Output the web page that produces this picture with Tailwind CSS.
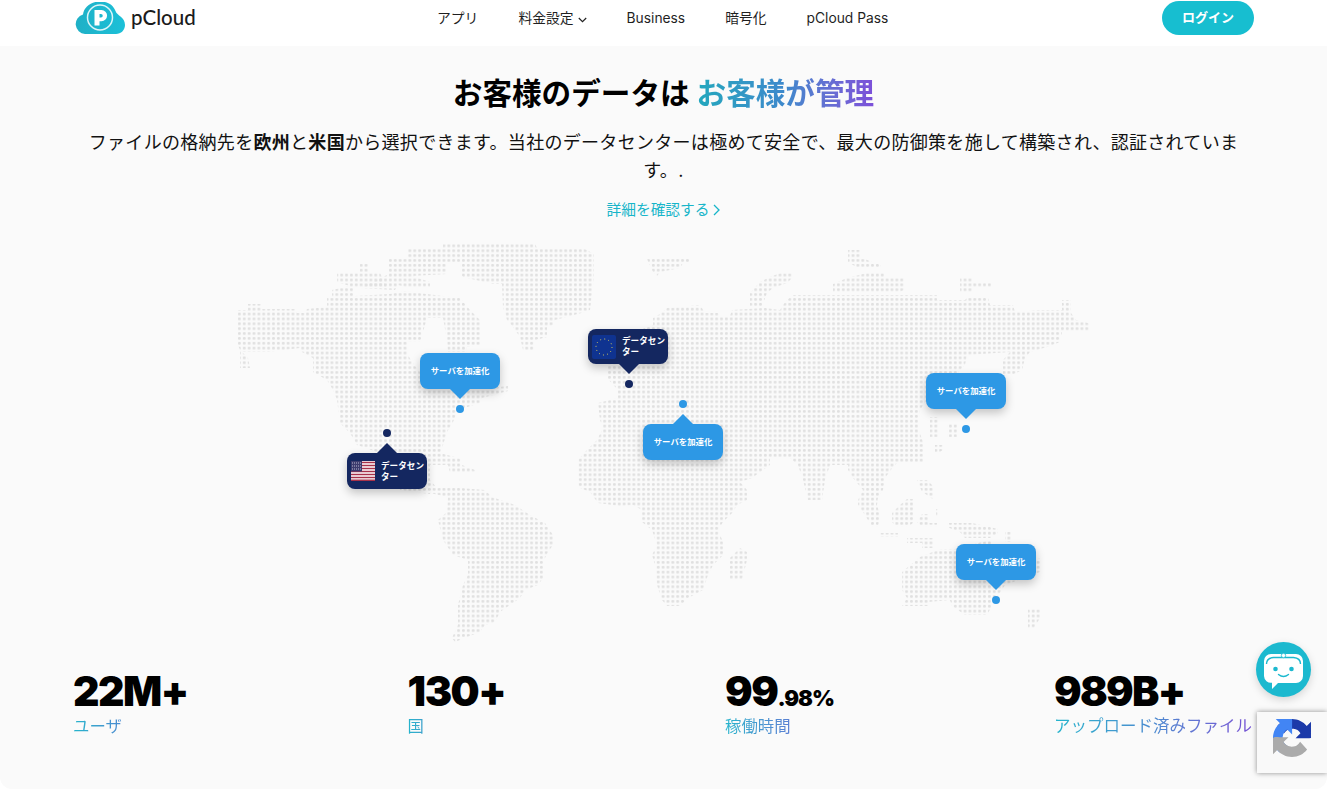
<!DOCTYPE html>
<html lang="ja">
<head>
<meta charset="utf-8">
<title>pCloud</title>
<script src="https://cdn.jsdelivr.net/npm/@tailwindcss/browser@4"></script>
</head>
<body class="bg-white h-[789px] overflow-hidden relative font-[Inter,'Noto_Sans_CJK_JP',sans-serif] text-black">
<header class="h-[46px] bg-white pt-px pl-[75px] pr-[73px]">
  <div class="flex items-center h-[34px]">
    <div class="w-[362px] flex items-center gap-[6px]">
      <svg class="w-[50px] h-[32px]" viewBox="0 0 50 32">
        <defs><linearGradient id="c" x1="0" x2="1"><stop offset="0" stop-color="#1fb0c6"/><stop offset="1" stop-color="#1cc0d8"/></linearGradient></defs>
        <path d="M10 32a10 10 0 0 1-2-19.6C9 5 16-.5 25-.5c7.500 0 13 3 15.500 9.500C42 14 50 14.500 50 23c0 5-4 9-9 9z" fill="url(#c)"/>
        <circle cx="25" cy="15.500" r="12.500" fill="none" stroke="#fff" stroke-opacity=".85" stroke-width="1.500"/>
        <path d="M19.500 23.500V8h7a5.500 5.500 0 0 1 0 11.200H24.500v4.300zM24.500 12v3.500h1.500a1.750 1.750 0 0 0 0-3.500z" fill="#fff" fill-rule="evenodd"/>
      </svg>
      <span class="font-['Lato',sans-serif] text-[20.500px] leading-none font-medium text-[#1b1b1b] -mt-px">pCloud</span>
    </div>
    <nav class="flex items-center gap-10 text-[13.800px] text-[#1f1f1f]">
      <a>アプリ</a>
      <a class="flex items-center gap-[4px]">料金設定
        <svg class="w-[9px] h-[6px] mt-[3px]" viewBox="0 0 9 6"><path d="M.8 1l3.700 3.700L8.200 1" fill="none" stroke="#222" stroke-width="1.200"/></svg>
      </a>
      <a>Business</a>
      <a>暗号化</a>
      <a>pCloud Pass</a>
    </nav>
    <button class="ml-auto w-[92px] h-[34px] rounded-full bg-[#17bed0] text-white text-[13px] font-semibold">ログイン</button>
  </div>
</header>

<main class="h-[743px] bg-[#fafafa] rounded-b-[12px] pt-[24px]">
  <h1 class="text-center text-[29.600px] leading-[46px] font-bold">お客様のデータは <span class="font-semibold bg-gradient-to-r from-[#22a7bd] via-[#3d88cc] to-[#7c4fd9] bg-clip-text text-transparent">お客様が管理</span></h1>
  <p class="mt-[12.500px] text-center text-[18px] leading-[28px] tracking-[0.3px] text-[#111] font-normal">ファイルの格納先を<b>欧州</b>と<b>米国</b>から選択できます。当社のデータセンターは極めて安全で、最大の防御策を施して構築され、認証されていま<br>す。.</p>
  <a class="mt-[13.500px] flex items-center justify-center gap-[4px] h-[24px] text-[14.700px] text-[#17b5c9]">詳細を確認する
    <svg class="w-[7px] h-[12px]" viewBox="0 0 7 12"><path d="M1 1l5 5-5 5" fill="none" stroke="#17b5c9" stroke-width="1.300"/></svg>
  </a>

  <div class="relative mt-[18px] h-[405px]">
    <svg class="w-[1327px] h-[405px]" viewBox="0 240 1327 405">
      <defs>
        <pattern id="dots" patternUnits="userSpaceOnUse" x="238" y="244.500" width="4.870" height="4.870">
          <rect width="2.800" height="2.800" rx="1" fill="#e0e0e0"/>
        </pattern>
      </defs>
      <g fill="url(#dots)">
        <!-- Greenland and the Arctic islands -->
        <path d="M443 244H535L537 248H583L594 254V277L590 310 585 312 555 320 553 325 547 327V337L535 340V350H523L520 337 513 327 507 320 503 307 502 284H493L463 277 460 273V262H447V250L443 248Z"/>
        <path d="M387 258H407V249H447V274L412 276 430 282V287H405L398 285 395 290 360 288 387 275Z"/>
        <path d="M360 263H369V273H360Z"/>
        <path d="M337 273H380L387 288H353V297H332V290L350 286 337 282Z"/>
        <!-- North America -->
        <path d="M238 310H248V304H261V309H295L297 313H305L307 309 327 307V298H353L355 296 390 294 405 291 418 293 460 298 470 310 480 320 481 345 467 347V352H448L447 340 443 318H427L420 342H408V355L412 362 420 372 422 385 490 388 508 386V391L482 398 480 403 458 410 453 422 447 432 443 445 440 453 462 459V465L475 470V473H450L448 465 430 465V480L437 488 430 490V494L400 490 397 454 380 453 357 445 350 433 340 423 337 400 333 390 327 380 313 372V358L302 352 300 348 268 352H242L248 358 250 368H240V350L238 345Z"/>
        <!-- South America -->
        <path d="M430 489 448 487 485 490 492 497 515 505 530 515 545 523 553 535V545L548 552 543 562V578L538 585 525 590 520 598 510 605 500 612 495 622 485 625 480 632 467 637 455 642 452 638 458 625V605L463 585 468 575V560L453 555 443 540 438 520 447 512 448 497 430 493Z"/>
        <!-- Iceland / Scandinavia top -->
        <path d="M647 259H690V263H683L680 268 660 272 657 276 653 272Z"/>
        <!-- Eurasia and Africa -->
        <path d="M667 308 700 305 705 313H718L720 316H730L732 310 765 308 780 310 783 305 787 300 793 295H937V300H965L967 298H988L990 305H1013L1015 312 1040 310H1062V300H1071V313L1076 320 1085 322 1090 324V331H1075L1062 332 1060 342 1047 347 1030 352 1025 358 1022 370 1012 375H1003V360L1010 352 967 355 965 365 960 370 950 385 930 395 920 410 918 428 923 442V462H898L893 467 885 478 883 490 878 497 877 505 880 515 878 527H872L865 515 858 505V500L863 490 853 478 848 470V465H830L825 480 822 500H808L803 480 798 465 790 458H770V465L763 470 752 478 740 482 747 490V500L737 505 733 512 723 522 718 530 723 542V555L713 565 708 575 703 590 688 598 680 606H667L662 600 657 585 655 565 652 555 657 545 652 530 642 522V510L633 505 620 506 598 503 590 492 578 487V460L587 450 597 440 603 428 600 420 598 403 618 398V390L607 378V364L620 350 640 330 653 325V318L660 314Z"/>
        <!-- Russian Arctic -->
        <path d="M848 250H860V257L872 262 881 265V268H858L848 262Z"/>
        <path d="M783 272H792V278L787 283 773 288 767 293 762 306H750V293L760 282 770 277Z"/>
        <path d="M867 273H884L885 278H904V290L900 292H833V284L847 278Z"/>
        <path d="M960 278H972V283H992V287H972V292H960Z"/>
        <!-- Japan, Korea -->
        <path d="M930 417H938V437H930Z"/>
        <path d="M947 423H957V437H947Z"/>
        <path d="M935 445H943V450L938 453H935Z"/>
        <!-- South-East Asia islands -->
        <path d="M917 480H927L934 487V500L927 495 922 492Z"/>
        <path d="M907 499H914V522L908 527H897L892 522V513L900 505Z"/>
        <path d="M922 514H928V523H937V527H922L917 522Z"/>
        <path d="M936 509H939V517H936Z"/>
        <path d="M947 523H972L998 529V533L990 538H965L960 532 947 527Z"/>
        <path d="M1005 532H1012V542H1005Z"/>
        <path d="M880 533H898V537H880Z"/>
        <path d="M907 538H933V548H922V543H907Z"/>
        <!-- Madagascar -->
        <path d="M740 548 747 552V560L742 580H730V558Z"/>
        <!-- Australia, New Zealand -->
        <path d="M942 549H955L990 540 1005 575 1040 558V572L1005 585 995 600 987 615H965L952 606 950 600 928 602V606H902L907 598 902 590V572L920 557 930 553Z"/>
        <path d="M1028 608H1040V618L1034 628H1028Z"/>
      </g>
    </svg>

    <!-- server pin, New York -->
    <div class="absolute left-[420px] top-[113px] w-[80px] h-[36px] rounded-[8px] bg-[#2d98e5] shadow-[0_4px_10px_rgba(0,0,0,0.22)] flex items-center justify-center text-white text-[8.400px] font-bold">サーバを加速化
      <span class="absolute left-[30px] top-full border-x-[10px] border-x-transparent border-t-[10px] border-t-[#2d98e5]"></span>
    </div>
    <span class="absolute left-[456px] top-[165px] w-[8px] h-[8px] rounded-full bg-[#2d98e5]"></span>

    <!-- US data centre -->
    <span class="absolute left-[383px] top-[189px] w-[8px] h-[8px] rounded-full bg-[#142760]"></span>
    <div class="absolute left-[347px] top-[213px] w-[80px] h-[36px] rounded-[8px] bg-[#142760] shadow-[0_4px_10px_rgba(0,0,0,0.22)] flex items-center pl-[4px] gap-[6px] text-white text-[8.600px] leading-[11px] font-bold">
      <span class="absolute left-[30px] bottom-full border-x-[10px] border-x-transparent border-b-[10px] border-b-[#142760]"></span>
      <svg class="w-[24px] h-[20px] shrink-0" viewBox="0 0 24 20">
        <rect width="24" height="20" fill="#fff"/>
        <path d="M0 1.500H24M0 4.500H24M0 7.500H24M0 10.500H24M0 13.500H24M0 16.500H24M0 19.300H24" stroke="#a8324a" stroke-width="1.500"/>
        <rect width="11" height="10.500" fill="#3c3b6e"/>
        <path d="M1 2H10M1 5H10M1 8H10" stroke="#c8c8dc" stroke-width=".9" stroke-dasharray="1 1"/>
      </svg>
      <span class="w-[44px] mt-px">データセンター</span>
    </div>

    <!-- EU data centre -->
    <div class="absolute left-[588px] top-[89px] w-[80px] h-[35px] rounded-[8px] bg-[#142760] shadow-[0_4px_10px_rgba(0,0,0,0.22)] flex items-center pl-[4px] gap-[6px] text-white text-[8.600px] leading-[11px] font-bold">
      <span class="absolute left-[31px] top-full border-x-[10px] border-x-transparent border-t-[10px] border-t-[#142760]"></span>
      <svg class="w-[24px] h-[24px] shrink-0" viewBox="0 0 24 24">
        <rect width="24" height="24" rx="2" fill="#0f3390"/>
        <circle cx="12" cy="12" r="8" fill="none" stroke="#e6d75a" stroke-width="1" stroke-dasharray="1 3.190"/>
      </svg>
      <span class="w-[44px]">データセンター</span>
    </div>
    <span class="absolute left-[625px] top-[140px] w-[8px] h-[8px] rounded-full bg-[#142760]"></span>

    <!-- server pin, Middle East -->
    <span class="absolute left-[679px] top-[160px] w-[8px] h-[8px] rounded-full bg-[#2d98e5]"></span>
    <div class="absolute left-[643px] top-[184px] w-[80px] h-[36px] rounded-[8px] bg-[#2d98e5] shadow-[0_4px_10px_rgba(0,0,0,0.22)] flex items-center justify-center text-white text-[8.400px] font-bold">サーバを加速化
      <span class="absolute left-[30px] bottom-full border-x-[10px] border-x-transparent border-b-[10px] border-b-[#2d98e5]"></span>
    </div>

    <!-- server pin, Tokyo -->
    <div class="absolute left-[926px] top-[133px] w-[80px] h-[36px] rounded-[8px] bg-[#2d98e5] shadow-[0_4px_10px_rgba(0,0,0,0.22)] flex items-center justify-center text-white text-[8.400px] font-bold">サーバを加速化
      <span class="absolute left-[30px] top-full border-x-[10px] border-x-transparent border-t-[10px] border-t-[#2d98e5]"></span>
    </div>
    <span class="absolute left-[962px] top-[185px] w-[8px] h-[8px] rounded-full bg-[#2d98e5]"></span>

    <!-- server pin, Sydney -->
    <div class="absolute left-[956px] top-[304px] w-[80px] h-[36px] rounded-[8px] bg-[#2d98e5] shadow-[0_4px_10px_rgba(0,0,0,0.22)] flex items-center justify-center text-white text-[8.400px] font-bold">サーバを加速化
      <span class="absolute left-[30px] top-full border-x-[10px] border-x-transparent border-t-[10px] border-t-[#2d98e5]"></span>
    </div>
    <span class="absolute left-[992px] top-[356px] w-[8px] h-[8px] rounded-full bg-[#2d98e5]"></span>
  </div>

  <section class="mt-[24px] pl-[73px] pr-[75px] flex justify-between">
    <div>
      <div class="text-[41px] leading-[44px] font-black tracking-[-1.500px]">22M+</div>
      <div class="mt-px inline-block text-[16.400px] leading-[24px] bg-gradient-to-r from-[#22b4cc] to-[#4a8ad0] bg-clip-text text-transparent">ユーザ</div>
    </div>
    <div>
      <div class="text-[41px] leading-[44px] font-black tracking-[-1.500px]">130+</div>
      <div class="mt-px inline-block text-[16.400px] leading-[24px] bg-gradient-to-r from-[#22b4cc] to-[#3fa0cc] bg-clip-text text-transparent">国</div>
    </div>
    <div>
      <div class="h-[44px] flex items-baseline text-[41px] leading-[44px] font-black tracking-[-1.500px]">99<span class="text-[22px] leading-none tracking-[-1px]">.98%</span></div>
      <div class="mt-px inline-block text-[16.400px] leading-[24px] bg-gradient-to-r from-[#22b4cc] to-[#5a7fd4] bg-clip-text text-transparent">稼働時間</div>
    </div>
    <div>
      <div class="text-[41px] leading-[44px] font-black tracking-[-1.700px]">989B+</div>
      <div class="mt-px inline-block text-[16.500px] leading-[24px] bg-gradient-to-r from-[#22b4cc] via-[#4a8ad0] to-[#7550d4] bg-clip-text text-transparent">アップロード済みファイル</div>
    </div>
  </section>
</main>

<!-- chat bot -->
<div class="absolute left-[1256px] top-[642px] w-[55px] h-[55px] rounded-full bg-[#1cb9cf] shadow-[0_3px_8px_rgba(0,0,0,0.15)]">
  <svg class="w-[55px] h-[55px]" viewBox="0 0 55 55">
    <path d="M15 12h25a7 7 0 0 1 7 7v15a7 7 0 0 1-7 7H22l-6 6v-6.300A7 7 0 0 1 8 34V19a7 7 0 0 1 7-7z" fill="#fff"/>
    <path d="M10.500 22q0-6 7-6.500h20q7 .5 7 6.500" fill="none" stroke="#1cb9cf" stroke-width="1.400"/>
    <circle cx="27.500" cy="13.500" r="2.200" fill="#fff" stroke="#1cb9cf" stroke-width=".8"/>
    <circle cx="19.500" cy="27" r="2.300" fill="#1cb9cf"/>
    <circle cx="35.500" cy="27" r="2.300" fill="#1cb9cf"/>
    <path d="M22.500 32.500q5 4 10 0" fill="none" stroke="#1cb9cf" stroke-width="1.400" stroke-linecap="round"/>
  </svg>
</div>

<!-- reCAPTCHA badge -->
<div class="absolute left-[1257px] top-[712px] w-[70px] h-[61px] bg-[#f9f9f9] shadow-[0_0_5px_rgba(128,128,128,0.9)] pl-[16px] pt-[7px]">
  <svg class="w-[38px] h-[38px]" viewBox="0 0 64 64">
    <path d="M64 31.955l-.033-1.37V4.687l-7.16 7.16C50.948 4.674 42.033.093 32.05.093c-10.4 0-19.622 4.96-25.458 12.64l11.736 11.86a15.550 15.550 0 0 1 4.754-5.334c2.050-1.600 4.952-2.906 9.968-2.906.606 0 1.074.07 1.417.2a15.400 15.400 0 0 1 11.790 7.502l-8.300 8.300c10.520-.04 22.400-.066 23.070.03" fill="#1c3aa9"/>
    <path d="M31.862 0l-1.370.033H4.594l7.160 7.160C4.580 13.060 0 21.975 0 31.958c0 10.400 4.960 19.622 12.640 25.458l11.860-11.736a15.550 15.550 0 0 1-5.334-4.754c-1.600-2.050-2.906-4.952-2.906-9.968 0-.606.07-1.074.2-1.417a15.400 15.400 0 0 1 7.502-11.790l8.300 8.300c-.04-10.520-.066-22.400.03-23.070" fill="#4285f4"/>
    <path d="M.001 31.955l.033 1.370v25.898l7.160-7.160c5.860 7.173 14.775 11.754 24.760 11.754 10.400 0 19.622-4.960 25.458-12.640L45.676 38.317a15.550 15.550 0 0 1-4.754 5.334c-2.050 1.600-4.952 2.906-9.968 2.906-.606 0-1.074-.07-1.417-.2a15.400 15.400 0 0 1-11.790-7.502l8.300-8.300c-10.520.04-22.400.066-23.070-.03" fill="#ababab"/>
  </svg>
</div>
</body>
</html>
